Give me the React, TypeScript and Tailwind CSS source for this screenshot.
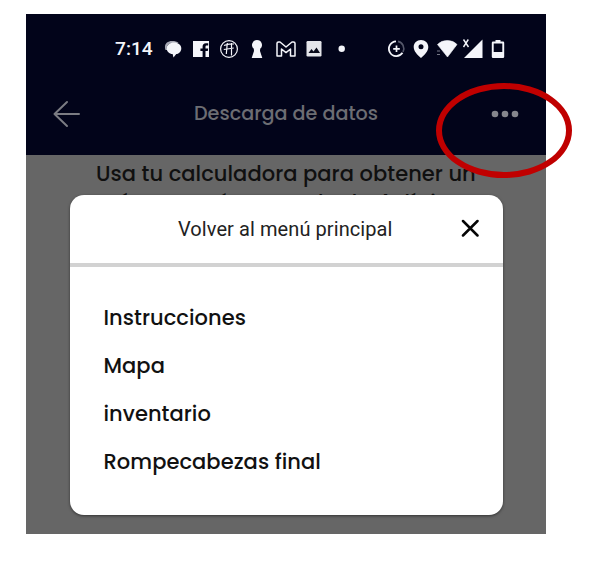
import React from "react";

const poppins = "font-['Poppins','Inter',sans-serif] whitespace-nowrap";

function StatusBar() {
  return (
    <div className="flex h-[69px] items-center pl-[89px] text-[#f4f5fa]">
      <span className="w-[49px] font-['Roboto',sans-serif] text-[19.2px] leading-[20px] font-medium">7:14</span>
      <svg className="h-5 w-[18px]" viewBox="0 0 18 20">
        <path d="M1.500 11C-.5 5.500 3 2 8 2c3 0 5 .6 6.600 2L6 4.500C3 5.500 2.200 8 3.200 11Z" fill="#a6a8b5" />
        <path d="M10 3.600c4.200 0 7.300 2.500 7.300 5.800 0 3-2.300 5.200-5 5.700L9.500 18.500l-.9-3.400c-3.400-.3-5.900-2.700-5.900-5.700C2.700 6.100 5.800 3.600 10 3.600Z" fill="currentColor" />
      </svg>
      <svg className="ml-[11px] h-5 w-4" viewBox="0 0 16 20">
        <path d="M0 2h16v16h-3.500v-6h2.300l.4-2.600h-2.700V8c0-.9.4-1.400 1.400-1.400h1.300V4.200h-2.300C10.700 4.200 9.600 5.500 9.600 7.500v1.900H7.400V12h2.200v6H0Z" fill="currentColor" />
      </svg>
      <svg className="ml-[10px] h-5 w-5" viewBox="0 0 20 20" fill="none" stroke="currentColor">
        <circle cx="10" cy="10" r="8.400" strokeWidth="1.200" />
        <path d="M8.300 4 7.300 15M12.500 4v12.500M4.800 10.500l10-1.500M5 6.500q4-2 10-1.500" strokeWidth="1.200" />
      </svg>
      <svg className="ml-[12px] h-5 w-3" viewBox="0 0 12 20">
        <path d="M6 1a5 5 0 0 1 3.200 8.800L9 12l2.300 7H.7L3 12l-.2-2.200A5 5 0 0 1 6 1Z" fill="currentColor" />
      </svg>
      <svg className="ml-[13px] h-5 w-5" viewBox="0 0 20 20" fill="none" stroke="currentColor" strokeWidth="1.500" strokeLinejoin="round">
        <path d="M1 4.200Q1 3 2.500 3H4l6 5 6-5h1.500Q19 3 19 4.200V17h-4.500v-7L10 13.600 5.500 10v7H1Z" />
      </svg>
      <svg className="ml-[10px] h-5 w-4" viewBox="0 0 16 20">
        <rect x=".5" y="2" width="15" height="15.500" rx="1.200" fill="#e4e5ea" />
        <path d="m2.500 14 3-4 2 2.500 3-4 3.500 5.500Z" fill="#080a1a" />
      </svg>
      <svg className="ml-[16px] h-5 w-2" viewBox="0 0 8 20">
        <circle cx="3.700" cy="9.800" r="3.200" fill="currentColor" />
      </svg>
      <svg className="ml-[41px] h-5 w-5" viewBox="0 0 20 20" fill="none" stroke="currentColor">
        <path d="M9 2.300a7.400 7.400 0 1 0 6.500 11.500" strokeWidth="1.800" />
        <path d="M11 2.400a7.400 7.400 0 0 1 5 10.500" stroke="#55586a" strokeWidth="1.600" />
        <path d="M9.500 6.500v6.600M6.200 9.800h6.600" strokeWidth="1.700" />
      </svg>
      <svg className="ml-[6px] h-5 w-4" viewBox="0 0 16 20">
        <path fillRule="evenodd" d="M8 1c4.200 0 7.300 3 7.300 7 0 4-3.500 7.800-7.300 11C4.200 15.800.7 12 .7 8 .7 4 3.800 1 8 1Zm0 4.300a2.500 2.500 0 1 0 0 5 2.500 2.500 0 0 0 0-5Z" fill="currentColor" />
      </svg>
      <svg className="ml-[7px] h-5 w-[22px]" viewBox="0 0 22 20">
        <path d="M1.500 5.500Q5 1.500 11.300 1.500T21 5.500L11.500 18Z" fill="currentColor" stroke="currentColor" strokeWidth=".6" strokeLinejoin="round" />
        <path d="M1 12h3M1 15.500h3" stroke="#777987" strokeWidth="1.200" />
      </svg>
      <svg className="ml-[4px] h-[22px] w-[22px]" viewBox="0 0 22 22">
        <path d="M20.500 1.500V20H2Z" fill="currentColor" />
        <path d="m1.500 1.500 5 7.500M6.300 1.500 1.500 9" stroke="currentColor" strokeWidth="1.400" />
      </svg>
      <svg className="ml-[7px] h-5 w-[14px]" viewBox="0 0 14 20">
        <path fillRule="evenodd" d="M4.500 1h5v1.500H12q1.200 0 1.200 1.200v14.100q0 1.200-1.200 1.200H2Q.8 19 .8 17.800V3.700Q.8 2.500 2 2.500h2.500ZM2.700 4.500v8.500h8.600v-8.500Z" fill="currentColor" />
      </svg>
    </div>
  );
}

function MenuItem({ label }: { label: string }) {
  return (
    <li className={`${poppins} h-[48.3px] text-[21px] leading-[48px] font-medium tracking-[0.05px] text-[#111]`}>
      {label}
    </li>
  );
}

export default function App() {
  return (
    <div className="relative h-[567px] w-[590px] overflow-hidden bg-white pt-[14px] pl-[26px]">
      <div className="relative flex h-[520px] w-[520px] flex-col bg-[#666]">
        <header className="h-[141px] bg-[#02041a]">
          <StatusBar />
          <div className="flex h-[62px] items-center pl-[27px]">
            <svg className="h-7 w-7" viewBox="0 0 28 28" fill="none" stroke="#7b7c83" strokeWidth="2" strokeLinecap="round" strokeLinejoin="round">
              <path d="M26 14H1.500M14 2 1.500 14 14 26" />
            </svg>
            <h1 className={`${poppins} ml-[113px] w-[186px] text-[19.2px] leading-7 font-medium text-[#6c6d73]`}>
              Descarga de datos
            </h1>
            <svg className="ml-[111px] h-2 w-7" viewBox="0 0 28 8" fill="#85868d">
              <circle cx="4" cy="4" r="3.300" />
              <circle cx="14" cy="4" r="3.300" />
              <circle cx="24" cy="4" r="3.300" />
            </svg>
          </div>
        </header>
        <div className={`${poppins} pt-1 text-[21px] leading-[29px] font-medium text-[#101010]`}>
          <p className="pl-[70px] tracking-[0.05px]">Usa tu calculadora para obtener un</p>
          <p className="pl-[78px] tracking-[0.2px]">número más cercado de 4 dígitos</p>
        </div>
        <section className="absolute top-[181px] left-[44px] h-[320px] w-[433px] rounded-[14px] bg-white shadow-[0_1px_3px_rgba(0,0,0,0.500)]">
          <div className="flex h-[72px] items-center border-b-4 border-[#d2d2d2] pl-[108px]">
            <h2 className="w-[216px] font-['Roboto',sans-serif] text-[20px] leading-6 tracking-[0.08px] whitespace-nowrap text-[#222]">
              Volver al menú principal
            </h2>
            <svg className="relative -top-px ml-[67px] h-[18px] w-[18px]" viewBox="0 0 18 18" fill="none" stroke="#050505" strokeWidth="2.500" strokeLinecap="round">
              <path d="m2 2 14.500 14.500M16.500 2 2 16.500" />
            </svg>
          </div>
          <ul className="pt-[26.5px] pl-[33.5px]">
            <MenuItem label="Instrucciones" />
            <MenuItem label="Mapa" />
            <MenuItem label="inventario" />
            <MenuItem label="Rompecabezas final" />
          </ul>
        </section>
      </div>
      <div className="absolute top-[83px] left-[436px] h-[95px] w-[136px] rounded-[50%] border-[6px] border-[#c00000]" />
    </div>
  );
}
